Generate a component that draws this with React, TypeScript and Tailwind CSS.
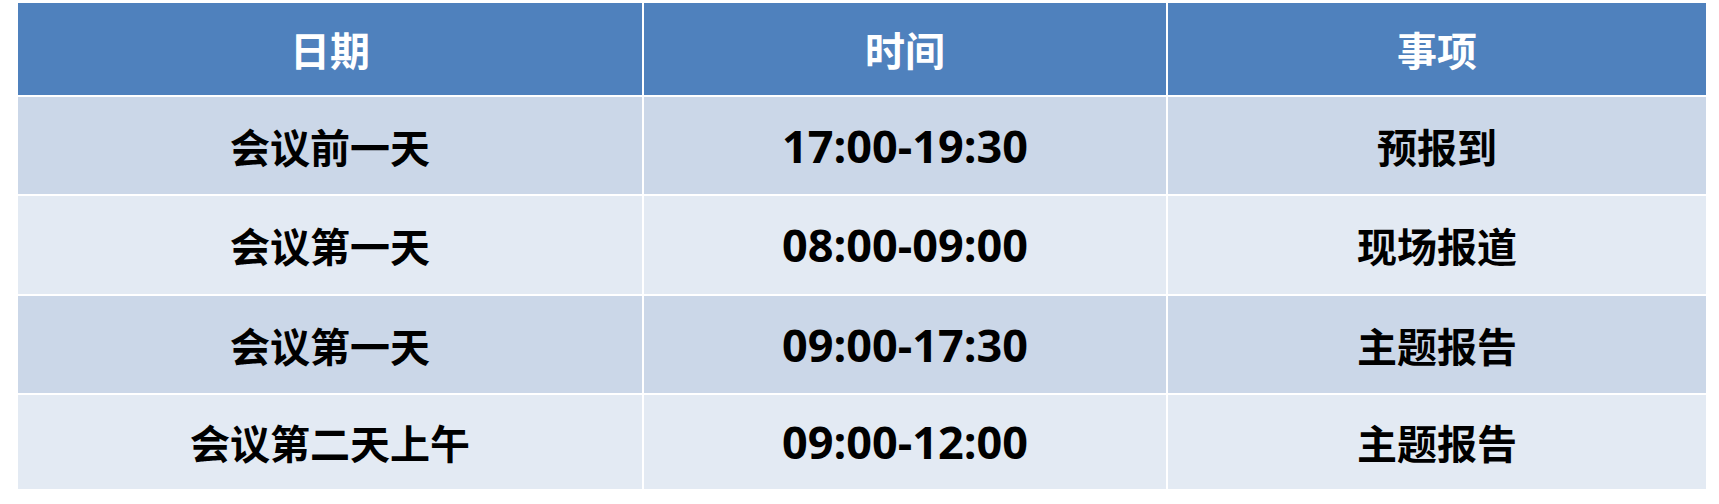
const rows = [
  { date: "会议前一天", time: "17:00-19:30", item: "预报到", h: "h-[97px]", bg: "bg-[#cbd7e8]" },
  { date: "会议第一天", time: "08:00-09:00", item: "现场报道", h: "h-[98px]", bg: "bg-[#e3eaf3]" },
  { date: "会议第一天", time: "09:00-17:30", item: "主题报告", h: "h-[97px]", bg: "bg-[#cbd7e8]" },
  { date: "会议第二天上午", time: "09:00-12:00", item: "主题报告", h: "h-[94px]", bg: "bg-[#e3eaf3]" },
];

const cjk = "font-['Noto_Sans_CJK_SC',sans-serif] font-bold text-[40px]";
const num = "font-['Open_Sans','Noto_Sans_CJK_SC',sans-serif] font-bold text-[45px]";

export default function App() {
  return (
    <div className="w-[1719px] h-[504px] bg-white pl-[18px] pt-[3px]">
      <div className="w-[1688px] flex flex-col gap-[2px]">
        {/* header */}
        <div className="grid grid-cols-[624px_522px_538px] gap-[2px] h-[92px]">
          {["日期", "时间", "事项"].map((t) => (
            <div key={t} className={`bg-[#4f81bd] text-white flex items-center justify-center ${cjk}`}>
              {t}
            </div>
          ))}
        </div>

        {rows.map((r, i) => (
          <div key={i} className={`grid grid-cols-[624px_522px_538px] gap-[2px] ${r.h}`}>
            <div className={`${r.bg} flex items-center justify-center text-black ${cjk}`}>{r.date}</div>
            <div className={`${r.bg} flex items-center justify-center text-black ${num}`}>{r.time}</div>
            <div className={`${r.bg} flex items-center justify-center text-black ${cjk}`}>{r.item}</div>
          </div>
        ))}
      </div>
    </div>
  );
}
